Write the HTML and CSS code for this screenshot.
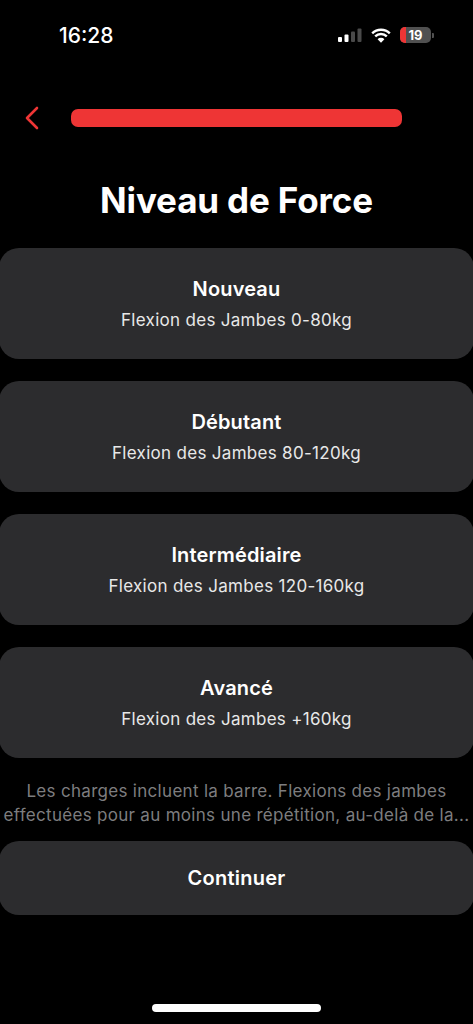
FILE: index.html
```html
<!DOCTYPE html>
<html lang="fr">
<head>
<meta charset="utf-8">
<title>Niveau de Force</title>
<link rel="stylesheet" href="styles.css">
</head>
<body>
<div class="screen">
  <div class="status">
    <span class="time">16:28</span>
    <div class="status-icons">
      <svg class="signal" width="24" height="14" viewBox="0 0 24 14"><rect x="0" y="9" width="4" height="5" rx="1" fill="#fff"/><rect x="6.5" y="6.5" width="4" height="7.5" rx="1" fill="#fff"/><rect x="13" y="3.5" width="4" height="10.5" rx="1" fill="#4a4a4a"/><rect x="19.5" y="0.5" width="4" height="13.5" rx="1" fill="#4a4a4a"/></svg>
      <svg class="wifi" width="20" height="15" viewBox="0 0 20 15"><path d="M1.2 5.4a12.4 12.4 0 0 1 17.6 0M4.2 8.4a8.2 8.2 0 0 1 11.6 0" fill="none" stroke="#fff" stroke-width="2.4"/><path d="M10 14.8 6.6 11.2a4.8 4.8 0 0 1 6.8 0z" fill="#fff"/></svg>
      <div class="battery"><div class="battery-level"></div><span class="battery-text">19</span></div>
      <div class="battery-cap"></div>
    </div>
  </div>
  <div class="nav">
    <svg class="back" width="16" height="24" viewBox="0 0 16 24"><path d="M13 2 3 12l10 10" fill="none" stroke="#ee3535" stroke-width="2.6" stroke-linecap="round" stroke-linejoin="round"/></svg>
    <div class="progress"></div>
  </div>
  <h1 class="title">Niveau de Force</h1>
  <div class="options">
    <div class="card"><div class="card-title">Nouveau</div><div class="card-sub">Flexion des Jambes 0-80kg</div></div>
    <div class="card"><div class="card-title">Débutant</div><div class="card-sub">Flexion des Jambes 80-120kg</div></div>
    <div class="card"><div class="card-title">Intermédiaire</div><div class="card-sub">Flexion des Jambes 120-160kg</div></div>
    <div class="card"><div class="card-title">Avancé</div><div class="card-sub">Flexion des Jambes +160kg</div></div>
  </div>
  <p class="note">Les charges incluent la barre. Flexions des jambes<br>effectuées pour au moins une répétition, au-delà de la...</p>
  <div class="continue">Continuer</div>
  <div class="home-wrap"><div class="home"></div></div>
</div>
</body>
</html>
```
FILE: styles.css
```css
* { box-sizing: border-box; }
html, body { margin: 0; padding: 0; background: #000; }
body { font-family: Inter, "Liberation Sans", sans-serif; color: #fff; }
.screen { width: 473px; height: 1024px; overflow: hidden; display: flex; flex-direction: column; background: #000; }
.status { height: 70px; padding: 24px 39.5px 0 59px; display: flex; justify-content: space-between; align-items: flex-start; }
.time { font-size: 21px; font-weight: 500; line-height: 24px; }
.status-icons { display: flex; align-items: center; height: 22px; }
.signal { margin-right: 9px; }
.wifi { margin-right: 9px; }
.battery { width: 31px; height: 16px; border-radius: 5px; background: #505050; position: relative; overflow: hidden; display: flex; align-items: center; justify-content: center; }
.battery-level { position: absolute; left: 0; top: 0; bottom: 0; width: 6px; background: #ee3535; }
.battery-text { position: relative; font-size: 13px; font-weight: 700; color: #fff; line-height: 16px; }
.battery-cap { width: 1.5px; height: 5px; background: #505050; margin-left: 1px; border-radius: 0 1px 1px 0; }
.nav { height: 28px; margin-top: 34px; padding-left: 24px; display: flex; align-items: center; }
.back { flex: none; }
.progress { width: 331px; height: 18px; margin-left: 31px; border-radius: 7px; background: #ee3535; }
.title { margin: 44px 0 0; height: 48px; font-size: 35px; font-weight: 700; line-height: 48px; text-align: center; letter-spacing: -0.15px; }
.options { margin: 24px -1px 0; display: flex; flex-direction: column; gap: 22px; }
.card { height: 111px; border-radius: 20px; background: #2c2c2e; display: flex; flex-direction: column; align-items: center; justify-content: center; }
.card-title { font-size: 20px; font-weight: 600; line-height: 26px; letter-spacing: 0.15px; }
.card-sub { margin-top: 7px; font-size: 17px; font-weight: 400; line-height: 22px; color: #e8e8e8; letter-spacing: 0.3px; }
.note { margin: 21px 0 0; height: 46px; font-size: 17px; line-height: 24px; text-align: center; color: #7d7d7f; white-space: nowrap; letter-spacing: 0.3px; }
.continue { margin: 16px -1px 0; height: 74px; border-radius: 20px; background: #2c2c2e; display: flex; align-items: center; justify-content: center; font-size: 20px; font-weight: 600; letter-spacing: 0.25px; }
.home-wrap { margin-top: 89px; display: flex; justify-content: center; }
.home { width: 169px; height: 8px; border-radius: 4px; background: #fff; }
```
